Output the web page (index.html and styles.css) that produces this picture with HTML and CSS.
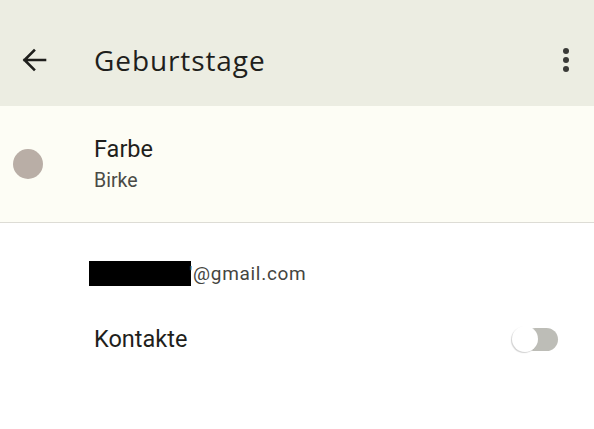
FILE: index.html
```html
<!DOCTYPE html>
<html lang="de">
<head>
<meta charset="utf-8">
<link rel="stylesheet" href="styles.css">
</head>
<body>
<div class="app">
  <header class="topbar">
    <svg class="back" width="26" height="26" viewBox="0 0 26 26" aria-hidden="true">
      <path d="M24 13H3.5M13 3.5L3.5 13L13 22.5" fill="none" stroke="#1f1f1c" stroke-width="2.6" stroke-linecap="square"/>
    </svg>
    <h1 class="title">Geburtstage</h1>
    <div class="more" aria-hidden="true"><span></span><span></span><span></span></div>
  </header>
  <section class="color-row">
    <div class="swatch"></div>
    <div class="color-text">
      <div class="label">Farbe</div>
      <div class="value">Birke</div>
    </div>
  </section>
  <section class="account">
    <div class="email"><span class="redact"></span><span class="email-text">'@gmail.com</span></div>
    <div class="contact-row">
      <span class="label">Kontakte</span>
      <span class="switch"><span class="track"></span><span class="thumb"></span></span>
    </div>
  </section>
</div>
</body>
</html>
```
FILE: styles.css
```css
* { box-sizing: border-box; }
html, body { margin: 0; padding: 0; background: #ffffff; }
body { font-family: Roboto, "Noto Sans", sans-serif; color: #1f1f1c; width: 594px; height: 429px; overflow: hidden; }
.app { display: flex; flex-direction: column; }

.topbar {
  height: 106px;
  background: #ecede2;
  display: flex;
  align-items: center;
  padding: 13px 0 0 21px;
}
.back { flex: none; display: block; }
.title {
  margin: 0 0 0 47px;
  font-family: "Open Sans", Roboto, sans-serif;
  font-size: 28px;
  font-weight: 400;
  letter-spacing: 0.9px;
  flex: 1;
  line-height: 32px;
}
.more {
  display: flex;
  flex-direction: column;
  gap: 3px;
  margin-right: 25px;
}
.more span { width: 6px; height: 6px; border-radius: 50%; background: #3a3a37; }

.color-row {
  height: 117px;
  background: #fdfdf5;
  border-bottom: 1px solid #dddcd5;
  display: flex;
  align-items: center;
  padding-left: 13px;
}
.swatch { width: 30px; height: 30px; border-radius: 50%; background: #b9aea6; flex: none; }
.color-text { margin-left: 51px; display: flex; flex-direction: column; }
.label { font-size: 23.5px; line-height: 28px; color: #1f1f1c; }
.value { font-size: 19.5px; line-height: 24px; color: #4a4a45; margin-top: 6px; }

.account { padding-left: 89px; }
.email { display: flex; align-items: center; margin-top: 38px; height: 25px; }
.redact { width: 102px; height: 25px; background: #000; display: block; }
.email-text { font-size: 19px; letter-spacing: 0.7px; color: #45453f; margin-left: -2px; }
.contact-row {
  display: flex;
  align-items: center;
  justify-content: space-between;
  padding-left: 5px;
  padding-right: 36px;
  margin-top: 40px;
  height: 26px;
}
.switch { position: relative; width: 46px; height: 26px; display: block; }
.track { position: absolute; right: 0; top: 2px; width: 34px; height: 23px; border-radius: 12px; background: #bdbdb7; }
.thumb { position: absolute; left: 0; top: 0; width: 26px; height: 26px; border-radius: 50%; background: #ffffff; box-shadow: -1px 1px 1px rgba(0,0,0,0.18); }
```
